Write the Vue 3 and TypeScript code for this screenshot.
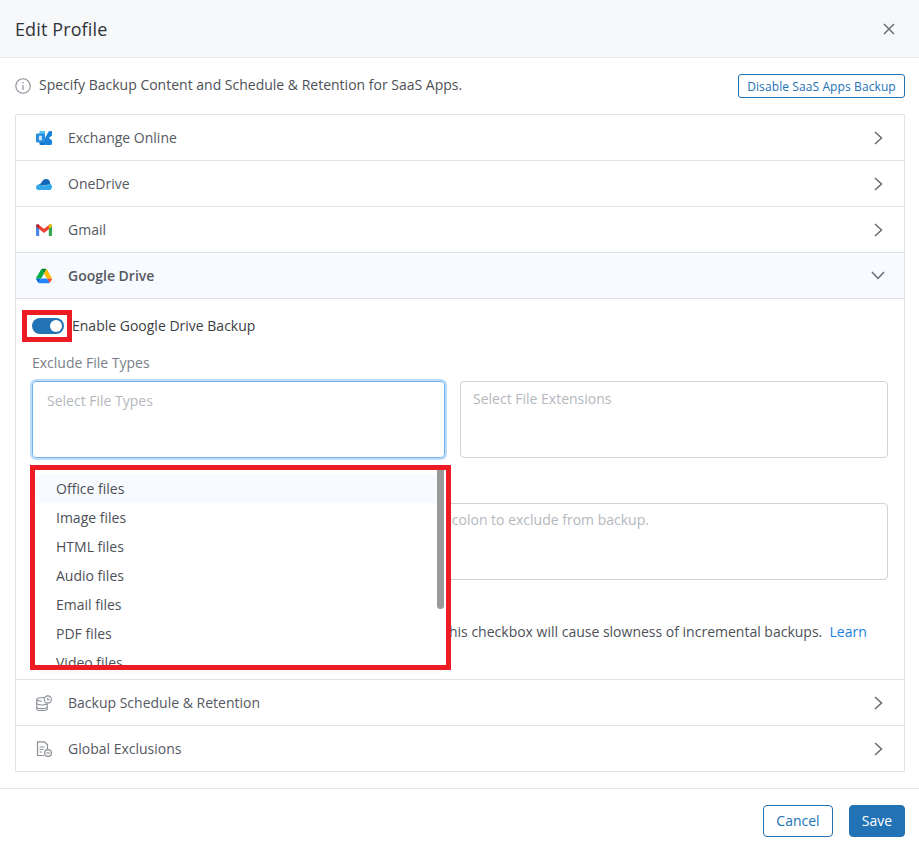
<script setup lang="ts">
const topRows = ['Exchange Online', 'OneDrive', 'Gmail']
const fileTypes = ['Office files', 'Image files', 'HTML files', 'Audio files', 'Email files', 'PDF files', 'Video files']
</script>

<template>
  <div class="modal">
    <header class="head">
      <h1>Edit Profile</h1>
      <svg class="close" width="12" height="12" viewBox="0 0 12 12"><path d="M1 1l10 10M11 1L1 11" stroke="#6b6f75" stroke-width="1.5" fill="none" /></svg>
    </header>
    <main class="body">
      <div class="banner">
        <div class="note">
          <svg width="16" height="16" viewBox="0 0 16 16"><circle cx="8" cy="8" r="7.2" fill="none" stroke="#8a8f96" stroke-width="1.1" /><path d="M8 7v5" stroke="#8a8f96" stroke-width="1.2" /><circle cx="8" cy="4.8" r=".8" fill="#8a8f96" /></svg>
          <span class="note-text">Specify Backup Content and Schedule &amp; Retention for SaaS Apps.</span>
        </div>
        <button class="btn-small">Disable SaaS Apps Backup</button>
      </div>
      <section class="accordion">
        <div v-for="(r, i) in topRows" :key="r" class="row">
          <span class="ic">
            <svg v-if="i === 0" width="16" height="16" viewBox="0 0 16 16">
              <path d="M3.500 1h5.500v4H3.500z" fill="#50c8f5" />
              <path d="M9 8L12.800 1.200 16 1v4.500L12.800 8 16 10.500V13.500a1.500 1.500 0 01-1.500 1.500H10L8 12z" fill="#1b82dc" />
              <path d="M3.500 10h6v5h-5a1 1 0 01-1-1z" fill="#1373c7" />
              <rect x="0" y="3.500" width="9" height="9" rx="1" fill="#2b8fe0" />
              <rect x="3" y="5.800" width="2.800" height="4.400" rx=".5" fill="#d6ebfb" />
            </svg>
            <svg v-else-if="i === 1" width="16" height="16" viewBox="0 0 16 16">
              <path d="M2.500 9.500C3 8 4.200 7.500 5 7.500 6 4.500 8 3 10 3c2 0 3.500 1.200 4 3.200l.5 3.300z" fill="#1267b8" />
              <path d="M0 11.500C0 9.500 1.500 8.500 3 8.500c3 0 4 1.500 5.500 1.500 1.500 0 2.500-2.300 5-2.300 1.500 0 2.500 1.300 2.500 3.300 0 1.500-1 3-2.300 3H2.300C1 14 0 13 0 11.500z" fill="#37a8ea" />
            </svg>
            <svg v-else width="16" height="16" viewBox="0 0 16 16">
              <path d="M0 4c0-1 .6-1.800 1.500-1.800.4 0 .8.200 1.100.4L3.200 3.100V14H1a1 1 0 01-1-1z" fill="#4a86e8" />
              <path d="M12.800 3.100l.6-.5c.3-.2.700-.4 1.100-.4.900 0 1.500.8 1.500 1.800V13a1 1 0 01-1 1h-2.200z" fill="#34a853" />
              <path d="M3 2.900L8 6.800l5-3.900v4.100L8 11 3 7z" fill="#ea4335" />
              <path d="M0 4.200L3.200 7V3.100L2.600 2.600C1.400 1.700 0 2.700 0 4.200z" fill="#c5221f" />
              <path d="M12.800 3.100V7L16 4.200c0-1.500-1.400-2.500-2.600-1.600z" fill="#fbbc04" />
            </svg>
          </span>
          <span class="label">{{ r }}</span>
          <svg class="chev" width="9" height="14" viewBox="0 0 9 14"><path d="M1 1l6.500 6L1 13" fill="none" stroke="#666b70" stroke-width="1.500" /></svg>
        </div>

        <div class="row open">
          <span class="ic">
            <svg width="16" height="16" viewBox="0 -4 87.300 86">
              <path d="M6.600 66.850l3.850 6.650c.8 1.400 1.950 2.500 3.300 3.300L27.500 53H0c0 1.550.4 3.100 1.200 4.500z" fill="#0066da" />
              <path d="M43.650 25L29.900 1.200c-1.350.8-2.500 1.900-3.300 3.300l-25.400 44A9.060 9.060 0 000 53h27.500z" fill="#00ac47" />
              <path d="M73.550 76.800c1.350-.8 2.500-1.900 3.300-3.300l1.600-2.750 7.650-13.250c.8-1.400 1.200-2.950 1.200-4.500H59.798l5.852 11.500z" fill="#ea4335" />
              <path d="M43.650 25L57.400 1.200C56.050.4 54.500 0 52.900 0H34.400c-1.600 0-3.150.45-4.500 1.200z" fill="#00832d" />
              <path d="M59.800 53H27.500L13.750 76.800c1.350.8 2.900 1.200 4.500 1.200h50.800c1.600 0 3.150-.45 4.500-1.200z" fill="#2684fc" />
              <path d="M73.400 26.500l-12.700-22c-.8-1.400-1.950-2.500-3.300-3.300L43.650 25 59.800 53h27.450c0-1.550-.4-3.100-1.200-4.500z" fill="#ffba00" />
            </svg>
          </span>
          <span class="label">Google Drive</span>
          <svg class="chev" width="14" height="9" viewBox="0 0 14 9"><path d="M1 1l6 6.500L13 1" fill="none" stroke="#666b70" stroke-width="1.500" /></svg>
        </div>

        <div class="content">
          <div class="switch-row">
            <span class="switch"><i></i></span>
            <span class="switch-text">Enable Google Drive Backup</span>
            <span class="mark mark-switch"></span>
          </div>
          <div class="field-label">Exclude File Types</div>
          <div class="pickers">
            <div class="box focused">
              <span>Select File Types</span>
              <div class="menu">
                <div class="menu-list">
                  <div v-for="(f, i) in fileTypes" :key="f" class="opt" :class="{ hover: i === 0 }">{{ f }}</div>
                </div>
                <span class="thumb"></span>
              </div>
              <span class="mark mark-menu"></span>
            </div>
            <div class="box"><span>Select File Extensions</span></div>
          </div>
          <div class="field-label second">Exclude Folders</div>
          <div class="box wide"><span>Enter the names or full paths of the folders separated by semicolon to exclude from backup.</span></div>
          <div class="check-row">
            <span class="check"></span>
            <p>Include files shared with the user in the backup. Selecting this checkbox will cause slowness of incremental backups.&nbsp; <a>Learn more</a></p>
          </div>
        </div>

        <div class="row">
          <span class="ic">
            <svg width="16" height="16" viewBox="0 0 16 16" fill="none" stroke="#8a8f96" stroke-width="1.100">
              <path d="M8 2.500C4 2.500.8 3.300.8 4.500v9.700c0 .8 2.500 1.300 5.200 1.300s5.200-.5 5.200-1.300V9" />
              <path d="M.8 4.500c0 1 2.500 1.700 5.200 1.700M.8 8.300c0 1 2.500 1.700 5.200 1.700 2 0 4-.4 5-1M.8 12c0 1 2.500 1.600 5.200 1.600s5.200-.6 5.200-1.600" />
              <circle cx="11.800" cy="4.500" r="3.600" /><path d="M11.800 2.500v2.200h1.800" />
            </svg>
          </span>
          <span class="label">Backup Schedule &amp; Retention</span>
          <svg class="chev" width="9" height="14" viewBox="0 0 9 14"><path d="M1 1l6.500 6L1 13" fill="none" stroke="#666b70" stroke-width="1.500" /></svg>
        </div>
        <div class="row">
          <span class="ic">
            <svg width="16" height="16" viewBox="0 0 16 16" fill="none" stroke="#8a8f96" stroke-width="1.200">
              <path d="M8 14.500H1.500V.8h7l3 3V8" />
              <path d="M3.500 6h5M3.500 8.500h4M3.500 11h2.500" />
              <circle cx="12" cy="12" r="3.400" /><path d="M10.300 12h3.400" />
            </svg>
          </span>
          <span class="label">Global Exclusions</span>
          <svg class="chev" width="9" height="14" viewBox="0 0 9 14"><path d="M1 1l6.500 6L1 13" fill="none" stroke="#666b70" stroke-width="1.500" /></svg>
        </div>
      </section>
    </main>
    <footer class="foot">
      <button class="btn outline">Cancel</button>
      <button class="btn solid">Save</button>
    </footer>
  </div>
</template>

<style>
html, body { margin: 0; background: #fff; }
</style>

<style scoped>
.modal { width: 919px; height: 852px; overflow: hidden; font-family: "Open Sans", "Noto Sans", sans-serif; font-size: 14px; color: #4d5157; background: #fff; }
.head { height: 57px; box-sizing: content-box; border-bottom: 1px solid #e9eaec; background: #f7f8fa; display: flex; align-items: center; justify-content: space-between; padding: 0 24px 0 15px; }
.head h1 { margin: 0; font-size: 18px; font-weight: 500; letter-spacing: .12px; color: #2f3338; }
.body { padding: 16px 14px 0 15px; }
.banner { height: 24px; display: flex; align-items: center; justify-content: space-between; margin-bottom: 16px; }
.note { display: flex; align-items: center; gap: 8px; color: #4d5157; margin-top: -1px; }
.note svg { flex: none; }
.note-text { margin-top: -2px; }
.btn-small { height: 24px; width: 167px; padding: 0; border: 1px solid #2272b6; border-radius: 3px; background: #fff; color: #2272b6; font: 12px "Open Sans", sans-serif; letter-spacing: .1px; }
.accordion { border: 1px solid #e1e2e4; border-bottom: 0; border-radius: 2px; width: 888px; }
.row { height: 45px; border-bottom: 1px solid #e1e2e4; display: flex; align-items: center; padding: 0 21px 0 20px; color: #55595f; }
.row.open { background: #f7faff; font-weight: 600; }
.row.open .chev { margin-right: -2px; }
.ic { width: 16px; height: 16px; margin-right: 16px; display: flex; }
.label { flex: 1; }
.content { height: 361px; border-bottom: 1px solid #e1e2e4; padding: 19px 16px 0; }
.switch-row { height: 16px; display: flex; align-items: center; gap: 8px; position: relative; color: #3a3e43; }
.switch-text { margin-top: -2px; }
.switch { width: 32px; height: 16px; border-radius: 8px; background: #2272b6; position: relative; flex: none; }
.switch i { position: absolute; right: 2px; top: 2px; width: 12px; height: 12px; border-radius: 50%; background: #fff; }
.mark { position: absolute; border: 5px solid #ed1c24; box-sizing: border-box; pointer-events: none; }
.mark-switch { left: -10px; top: -8px; width: 50px; height: 32px; }
.field-label { margin-top: 19px; height: 20px; line-height: 20px; color: #7a7f87; }
.field-label.second { margin-top: 17px; }
.pickers { margin-top: 8px; display: grid; grid-template-columns: 413px 428px; gap: 15px; }
.box { height: 77px; box-sizing: border-box; border: 1px solid #cfd2d6; border-radius: 4px; padding: 7px 12px; color: #b4b8be; position: relative; }
.box.focused { border: 1px solid #6fb2ee; box-shadow: 0 0 0 2px #bddcf7; padding: 9px 14px; }
.box.wide { margin-top: 8px; width: 856px; padding: 6px 12px 6px 15px; }
.menu { position: absolute; left: 2px; top: 88px; width: 411px; height: 195px; overflow: hidden; background: #fff; box-shadow: 0 2px 8px rgba(0, 0, 0, .15); color: #4d5157; z-index: 2; }
.menu-list { padding-top: 4px; }
.opt { height: 29px; line-height: 29px; padding-left: 21px; width: 402px; box-sizing: border-box; }
.opt.hover { background: #f7faff; }
.thumb { position: absolute; right: 2px; top: 0; width: 7px; height: 139px; background: #999; border-radius: 0 0 4px 4px; }
.mark-menu { left: -3px; top: 83px; width: 421px; height: 205px; z-index: 3; }
.check-row { margin-top: 40px; display: flex; gap: 19px; align-items: flex-start; color: #4d5157; }
.check { width: 14px; height: 14px; margin-top: 3px; border: 1px solid #cfd2d6; border-radius: 2px; flex: none; }
.check-row p { margin: 0; line-height: 23px; width: 823px; }
.check-row a { color: #1a82e2; }
.foot { margin-top: 16px; border-top: 1px solid #e6e7e9; padding: 16px 14px 0; display: flex; justify-content: flex-end; gap: 16px; }
.btn { height: 32px; border-radius: 4px; font: 14px "Open Sans", sans-serif; padding: 0 0 2px; }
.outline { width: 70px; background: #fff; border: 1px solid #2272b6; color: #2272b6; }
.solid { width: 56px; background: #2272b6; border: 1px solid #2272b6; color: #fff; }
</style>
